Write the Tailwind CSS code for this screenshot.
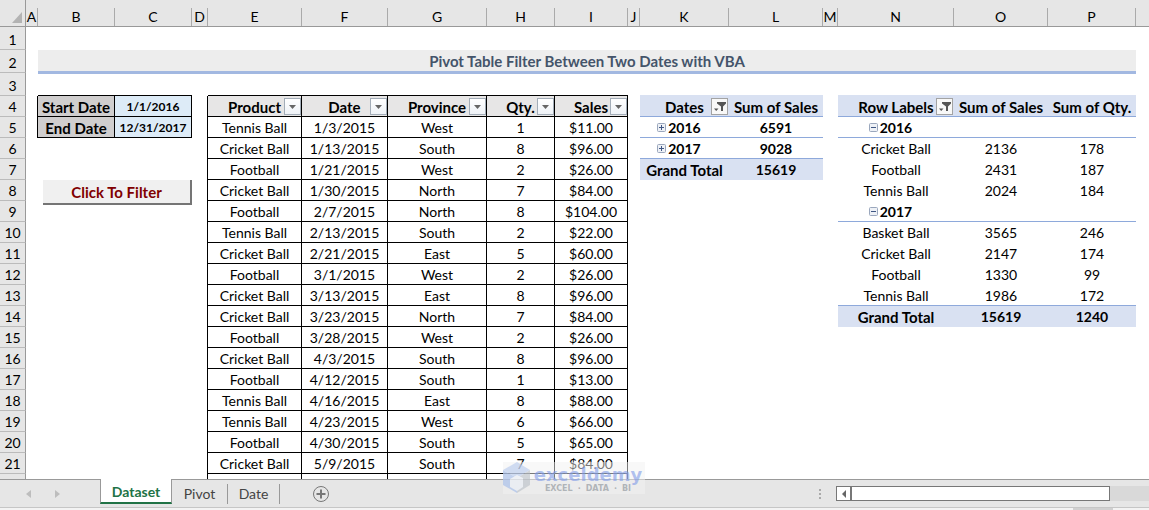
<!DOCTYPE html>
<html lang="en">
<head>
<meta charset="utf-8">
<title>Pivot Table Filter Between Two Dates with VBA</title>
<script src="https://cdn.jsdelivr.net/npm/@tailwindcss/browser@4"></script>
</head>
<body class="flex h-screen flex-col overflow-hidden bg-[#e6e6e6] font-['Lato','Open_Sans',sans-serif] text-sm text-black">

<main class="min-h-0 flex-1 overflow-hidden bg-white">
  <table class="w-full table-fixed border-separate border-spacing-0 text-center leading-[18px]">
    <colgroup>
      <col class="w-[26px]"><col class="w-[12px]"><col class="w-[77px]"><col class="w-[77px]"><col class="w-[16px]">
      <col class="w-[94px]"><col class="w-[86px]"><col class="w-[99px]"><col class="w-[68px]"><col class="w-[73px]">
      <col class="w-[12px]"><col class="w-[89px]"><col class="w-[94px]"><col class="w-[15px]"><col class="w-[116px]">
      <col class="w-[94px]"><col class="w-[88px]"><col>
    </colgroup>
    <thead><tr id="letters"></tr></thead>
    <tbody id="cells"></tbody>
  </table>
</main>

<footer class="relative shrink-0">
  <div class="flex h-7 items-start text-[#444]">
    <nav class="flex h-full w-[100px] items-center gap-6 border-t border-[#999] pl-[26px]" aria-label="Scroll sheets">
      <button aria-label="Previous sheet"><svg class="block" width="5" height="8" viewBox="0 0 5 8"><path d="M5 0v8L0 4z" fill="#bdbdbd"/></svg></button>
      <button aria-label="Next sheet"><svg class="block" width="5" height="8" viewBox="0 0 5 8"><path d="M0 0v8l5-4z" fill="#bdbdbd"/></svg></button>
    </nav>
    <button class="h-[25px] w-[72px] border-x border-b-2 border-x-[#999] border-b-[#217346] bg-white pt-0.5 font-bold text-[#217346]">Dataset</button>
    <div class="flex h-full flex-1 items-center border-t border-[#999]">
      <button class="h-5 w-14 border-r border-[#999] leading-4">Pivot</button>
      <button class="h-5 w-[52px] border-r border-[#999] leading-4">Date</button>
      <button class="ml-8" aria-label="New sheet"><svg class="block" width="18" height="18" viewBox="0 0 18 18" fill="none" stroke="#777"><circle cx="9" cy="9" r="7.5"/><path d="M9 4.500v9M4.500 9h9" stroke-width="2"/></svg></button>
      <svg class="mr-[15px] ml-auto" width="2" height="10" viewBox="0 0 2 10" fill="#aaa"><path d="M0 0h2v2H0zM0 4h2v2H0zM0 8h2v2H0z"/></svg>
      <div class="flex h-[15px] w-[313px] bg-[#d9d9d9]">
        <button class="flex w-[15px] items-center justify-center border border-[#777] bg-white" aria-label="Scroll left"><svg width="4" height="8" viewBox="0 0 4 8"><path d="M4 0v8L0 4z" fill="#666"/></svg></button>
        <div class="w-[259px] border border-[#777] bg-white"></div>
      </div>
    </div>
  </div>
  <div class="flex h-[3px] justify-end border-t border-[#c6c6c6] bg-[#f3f3f3] pr-9"><span class="w-10 bg-[#d0d0d0]"></span></div>

  <div class="absolute bottom-4 left-[503px] flex h-8 w-[142px] items-center bg-[#f2f2f2]/50">
    <svg class="shrink-0 opacity-60" width="28" height="32" viewBox="0 0 28 32"><path d="M14 0l13 8-13 8-14-8z" fill="#b5c9ee"/><path d="M0 8l14 8v15L0 23z" fill="#9fb9ea"/><path d="M27 8l-13 8v15l13-8z" fill="#b8bfc6"/><path d="M7 17l7-4 6 3v9l-6 4-7-4z" fill="#e9eef6"/></svg>
    <div class="flex flex-1 flex-col items-center pt-1 font-['DejaVu_Sans',sans-serif] font-bold">
      <span class="text-lg leading-[18px] text-[#7f9be8]/60">exceldemy</span>
      <span class="flex gap-[5px] text-[8px] leading-[10px] text-[#a0a5aa]/80"><span>EXCEL</span><span>·</span><span>DATA</span><span>·</span><span>BI</span></span>
    </div>
  </div>
</footer>

<script>
const sales = `Tennis Ball|1/3/2015|West|1|$11.00
Cricket Ball|1/13/2015|South|8|$96.00
Football|1/21/2015|West|2|$26.00
Cricket Ball|1/30/2015|North|7|$84.00
Football|2/7/2015|North|8|$104.00
Tennis Ball|2/13/2015|South|2|$22.00
Cricket Ball|2/21/2015|East|5|$60.00
Football|3/1/2015|West|2|$26.00
Cricket Ball|3/13/2015|East|8|$96.00
Cricket Ball|3/23/2015|North|7|$84.00
Football|3/28/2015|West|2|$26.00
Cricket Ball|4/3/2015|South|8|$96.00
Football|4/12/2015|South|1|$13.00
Tennis Ball|4/16/2015|East|8|$88.00
Tennis Ball|4/23/2015|West|6|$66.00
Football|4/30/2015|South|5|$65.00
Cricket Ball|5/9/2015|South|7|$84.00`.split('\n').map(r => r.split('|'));

const years = { 5: ['2016', '6591'], 6: ['2017', '9028'] };
const products = {
  6: ['Cricket Ball', '2136', '178'], 7: ['Football', '2431', '187'], 8: ['Tennis Ball', '2024', '184'],
  10: ['Basket Ball', '3565', '246'], 11: ['Cricket Ball', '2147', '174'], 12: ['Football', '1330', '99'], 13: ['Tennis Ball', '1986', '172']
};

const arrow = name => `<button aria-label="Filter ${name}" class="absolute right-0 bottom-px flex size-[17px] items-center justify-center border border-[#a3adb8] bg-linear-to-b from-white to-[#eef2f7]"><svg width="7" height="4" viewBox="0 0 7 4"><path d="M0 0h7L3.500 4z" fill="#666"/></svg></button>`;
const funnel = name => `<button aria-label="Filter ${name}" class="absolute right-px bottom-px flex size-[17px] items-center justify-center border border-[#a3a3a3] bg-[#f8f8f8]"><svg width="12" height="10" viewBox="0 0 12 10" fill="#555"><path d="M3 0h9v1.500L9 4.500V9H7V4.500L3 1.500zM0 6.500h4.500L2.200 9z"/></svg></button>`;
const toggle = (year, open) => `<span class="relative">${year}<button aria-label="${open ? 'Collapse' : 'Expand'} ${year}" class="absolute right-full bottom-1 mr-0.5"><svg class="block" width="9" height="9" viewBox="0 0 9 9"><rect x=".5" y=".5" width="8" height="8" rx="1" fill="#eef1f6" stroke="#9aa7bd"/><path d="${open ? 'M2 4.500h5' : 'M2 4.500h5M4.500 2v5'}" stroke="#3f5683"/></svg></button></span>`;
const td = (cls, html = '') => `<td class="relative whitespace-nowrap p-0 pt-0.5 align-top ${cls}">${html}</td>`;

document.getElementById('letters').innerHTML =
  '<th class="h-[27px] border-r border-b border-[#999] bg-[#e6e6e6] p-0"><svg class="mt-2 ml-3 block" width="10" height="11" viewBox="0 0 10 11"><path d="M10 0v11H0z" fill="#b3b3b3"/></svg></th>' +
  [...'ABCDEFGHIJKLMNOP', ''].map(l => `<th class="border-b border-[#999] bg-[#e6e6e6] p-0 pt-2 font-normal"><span class="block h-[18px] leading-[18px] ${l ? 'border-r border-[#aaa]' : ''}">${l}</span></th>`).join('');

function rowCells(n) {
  if (n === 1) return td('') + '<td colspan="16"></td>';
  if (n === 2) return td('') +
    '<td colspan="15" class="border-b-2 border-[#a2b8e1] bg-[#ededed] p-0 text-[15px] leading-5 font-bold text-[#44546a] shadow-[0_1px_0_#a2b8e1]">Pivot Table Filter Between Two Dates with VBA</td><td></td>';
  if (n === 3) {
    const k = 'border-b border-black', p = 'border-b border-[#d9e1f2]';
    return ['', k, k, '', k, k, k, k, k, '', p, p, '', p, p, p, ''].map(c => td(c)).join('');
  }
  let out = '';
  const box = 'border-r border-b border-black';
  const dates = { 4: ['Start Date', '1/1/2016'], 5: ['End Date', '12/31/2017'] }[n];
  if (dates) out += td('border-r border-black') + td(box + ' bg-[#d0cece] text-[15px] font-bold', dates[0]) + td(box + ' bg-[#ddebf7] text-xs leading-[18px] font-bold', dates[1]);
  else out += td('') + td('', n === 8 ? '<button class="absolute top-0 left-[5px] z-10 h-[25px] w-[149px] border-r-2 border-b-2 border-[#757575] bg-[#f0f0f0] text-[15px] leading-5 font-bold text-[#800000]">Click To Filter</button>' : '') + td('');
  out += td('border-r border-black');
  if (n === 4) out += ['Product', 'Date', 'Province', 'Qty.', 'Sales'].map(h => `<th scope="col" class="relative border-r border-b border-black bg-[#e7e6e6] p-0 pt-0.5 align-top text-[15px] font-bold">${h}${arrow(h)}</th>`).join('');
  else out += (sales[n - 5] || ['', '', '', '', '']).map(v => td(box, v)).join('');
  out += td('');

  const blue = 'border-b border-[#8ea9db] ', fill = 'bg-[#d9e1f2] font-bold ', label = 'text-[15px] ';
  if (n === 4) out += td(blue + fill + label, 'Dates' + funnel('Dates')) + td(blue + fill + label, 'Sum of Sales');
  else if (years[n]) out += td(blue + 'font-bold', toggle(years[n][0], false)) + td(blue + 'font-bold', years[n][1]);
  else if (n === 7) out += td(fill + label, 'Grand Total') + td(fill, '15619');
  else out += td('') + td('');
  out += td('');

  if (n === 4) out += td(blue + fill + label, 'Row Labels' + funnel('Row Labels')) + td(blue + fill + label, 'Sum of Sales') + td(blue + fill + label, 'Sum of Qty.');
  else if (n === 5 || n === 9) out += td(blue + 'font-bold', toggle(n === 5 ? '2016' : '2017', true)) + td(blue) + td(blue);
  else if (products[n]) out += products[n].map(v => td(n === 13 ? blue : '', v)).join('');
  else if (n === 14) out += td(fill + label, 'Grand Total') + td(fill, '15619') + td(fill, '1240');
  else out += td('') + td('') + td('');
  return out + td('');
}

for (let n = 1; n <= 22; n++) {
  const tr = document.createElement('tr');
  tr.className = n < 4 ? 'h-[23px]' : 'h-[21px]';
  tr.innerHTML = `<th scope="row" class="border-r border-b border-r-[#999] border-b-[#bbb] bg-[#e6e6e6] p-0 align-bottom font-normal">${n < 22 ? n : ''}</th>` + rowCells(n);
  document.getElementById('cells').append(tr);
}
</script>
</body>
</html>
